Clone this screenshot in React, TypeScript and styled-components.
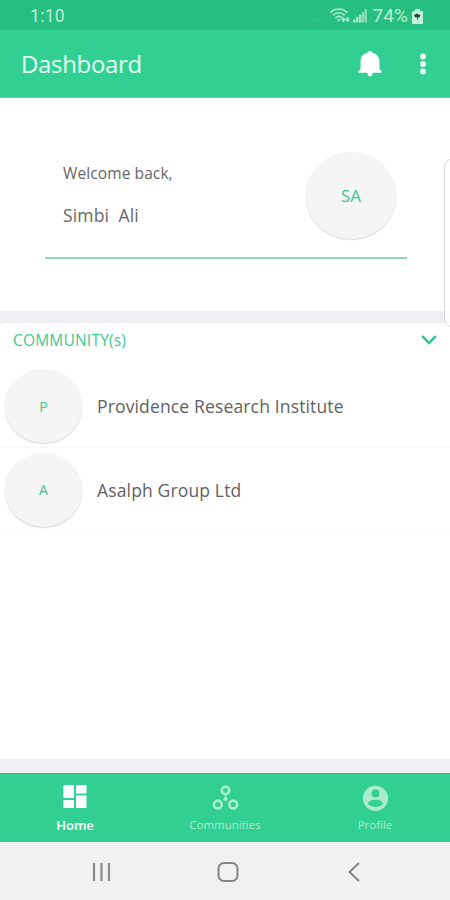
import React from "react";
import styled, { createGlobalStyle } from "styled-components";

const GlobalStyle = createGlobalStyle`
  * { box-sizing: border-box; }
  body { margin: 0; background: #fff; font-family: "Open Sans", "Noto Sans", sans-serif; }
  svg { display: block; flex: none; }
`;

const Screen = styled.div`
  position: relative;
  width: 450px;
  height: 900px;
  display: flex;
  flex-direction: column;
  background: #fff;
  overflow: hidden;
`;

const StatusBar = styled.header`
  height: 30px;
  flex: none;
  display: flex;
  align-items: center;
  padding: 2px 27px 0 30px;
  background: #26be81;
  color: #b9f0d6;
  font: 17px/28px Roboto, sans-serif;
`;

const Clock = styled.span`
  font-size: 17.5px;
  letter-spacing: 0.3px;
  margin-right: auto;
`;

const Battery = styled.span`
  margin: 0 4px 0 5px;
  font-size: 19px;
  letter-spacing: 0.1px;
`;

const AppBar = styled.div`
  height: 68px;
  flex: none;
  display: flex;
  align-items: center;
  padding: 1px 24px 0 21px;
  background: #31d092;
  border-bottom: 1px solid #5fd9a9;
`;

const Title = styled.h1`
  margin: 0 auto 0 0;
  font-size: 24px;
  letter-spacing: -0.33px;
  line-height: 32px;
  font-weight: 400;
  color: #e4fff3;
`;

const BellIcon = styled.svg`
  margin-right: 38px;
`;

const Welcome = styled.section`
  height: 213px;
  flex: none;
  padding: 54px 43px 0 45px;
`;

const WelcomeRow = styled.div`
  display: flex;
  height: 107px;
  padding: 0 11px 0 18px;
  justify-content: space-between;
  border-bottom: 2px solid #8fd6b7;
`;

const Greeting = styled.div`
  display: flex;
  flex-direction: column;
  padding-top: 11px;
  gap: 22px;
  color: #666;
`;

const GreetingLine = styled.span<{ $size: number; $spacing: number }>`
  font-size: ${(p) => p.$size}px;
  letter-spacing: ${(p) => p.$spacing}px;
  line-height: 20px;
  white-space: pre;
`;

const Avatar = styled.div<{ $w: number; $h: number; $font: number }>`
  flex: none;
  width: ${(p) => p.$w}px;
  height: ${(p) => p.$h}px;
  border-radius: 50%;
  display: flex;
  align-items: center;
  justify-content: center;
  background: #f5f5f5;
  box-shadow: 0 1px 1.5px rgba(0, 0, 0, 0.17);
  color: #37c990;
  font-size: ${(p) => p.$font}px;
`;

const Divider = styled.div<{ $h: number }>`
  flex: none;
  height: ${(p) => p.$h}px;
  background: #efeff3;
`;

const Panel = styled.section`
  flex: 1;
  background: #fff;
  border-radius: 4px 4px 0 0;
  box-shadow: 0 -4px 0 #efeff3;
`;

const PanelHeader = styled.div`
  height: 41px;
  display: flex;
  align-items: flex-start;
  justify-content: space-between;
  padding: 7px 13px 0;
`;

const PanelTitle = styled.h2`
  margin: 0;
  font-size: 15.5px;
  letter-spacing: 0.2px;
  line-height: 20px;
  font-weight: 400;
  color: #3ccb93;
`;

const Chevron = styled.svg`
  margin-top: 5px;
`;

const CommunityRow = styled.div`
  height: 83.5px;
  display: flex;
  align-items: center;
  gap: 15px;
  padding: 2px 5px 0;
  border-bottom: 1px solid #f8f8f8;
`;

const CommunityName = styled.span`
  font-size: 17.5px;
  letter-spacing: 0.15px;
  color: #626262;
`;

const TabBar = styled.nav`
  height: 69px;
  flex: none;
  display: grid;
  grid-template-columns: repeat(3, 1fr);
  background: #31d092;
  border-top: 1px solid #25c184;
`;

const Tab = styled.div<{ $active?: boolean }>`
  display: flex;
  flex-direction: column;
  align-items: center;
  padding-top: 8px;
  color: ${(p) => (p.$active ? "#fff" : "#a9ecce")};
`;

const TabLabel = styled.span<{ $size: number; $weight: number }>`
  margin-top: 5px;
  font-size: ${(p) => p.$size}px;
  font-weight: ${(p) => p.$weight};
  line-height: 16px;
`;

const SystemBar = styled.footer`
  height: 58px;
  flex: none;
  display: flex;
  align-items: center;
  padding: 2px 90px 0 92px;
  background: #f1f1f1;
`;

const HomeKey = styled.svg`
  margin: 0 auto 0 105.5px;
`;

const EdgeHandle = styled.div`
  position: absolute;
  top: 159px;
  right: -12px;
  width: 18px;
  height: 168px;
  border: 1.5px solid #d9d9dc;
  border-radius: 7px;
  background: rgba(255, 255, 255, 0.75);
`;

const communities = [
  { initial: "P", name: "Providence Research Institute" },
  { initial: "A", name: "Asalph Group Ltd" },
];

export default function App() {
  return (
    <>
      <GlobalStyle />
      <Screen>
        <StatusBar>
          <Clock>1:10</Clock>
          <svg width="58" height="18" viewBox="0 0 58 18">
            <path d="M0 13.500h13" stroke="#3cc48e" strokeWidth="1" strokeDasharray="3 1" />
            <g fill="none" stroke="#a9e8ca" strokeWidth="1.600" strokeLinecap="round">
              <path d="M21.800 5.200C26 1 33.600 1 37.800 5.200" />
              <path d="M24.300 8C27 5 32.600 5 35.300 8" />
              <path d="M26.800 10.700C28.200 8.900 31.400 8.900 32.800 10.700" />
            </g>
            <path d="M29.800 15l-2-2.800h4z" fill="#a9e8ca" />
            <path d="M34.500 10l2.200 3h-1.300v2h-1.800v-2h-1.300zM38.500 15.200l-2.200-3h1.300v-2h1.800v2h1.300z" fill="#c5f3dd" />
            <path d="M44 12.500h2.500v3H44zM47 10h2.500v5.500H47zM50 7.500h2.500v8H50z" fill="#a2e7c6" />
            <path d="M53 5h2.300v10.500H53zM55.800 2H58v13.500h-2.200z" fill="#8cdfb9" />
          </svg>
          <Battery>74%</Battery>
          <svg width="11" height="15" viewBox="0 0 11 15">
            <path d="M3 0h5v2h2a1 1 0 0 1 1 1v11a1 1 0 0 1-1 1H1a1 1 0 0 1-1-1V3a1 1 0 0 1 1-1h2z" fill="#c4f1dc" />
            <path d="M2 6L5 4.500l3.500 1.700-.8 2H6.200l-.7 3.300-.6-3.200H3z" fill="#174e38" />
          </svg>
        </StatusBar>

        <AppBar>
          <Title>Dashboard</Title>
          <BellIcon width="24" height="26" viewBox="0 0 24 26">
            <path
              fill="#fff"
              d="M12 0c1.300 0 2.200.7 2.400 1.700 4.300 1 7 4 7 8.300v8l2.100 2.300v1.500H.5v-1.500L2.600 18v-8c0-4.300 2.700-7.300 7-8.300C9.800.7 10.700 0 12 0zM9.400 21.500h5.200c-.2 2.600-1.200 4-2.600 4s-2.400-1.400-2.600-4z"
            />
          </BellIcon>
          <svg width="6" height="22" viewBox="0 0 6 22" fill="#effff8">
            <circle cx="3" cy="3.500" r="2.900" />
            <circle cx="3" cy="11" r="2.900" />
            <circle cx="3" cy="18.500" r="2.900" />
          </svg>
        </AppBar>

        <Welcome>
          <WelcomeRow>
            <Greeting>
              <GreetingLine $size={15.5} $spacing={0.1}>Welcome back,</GreetingLine>
              <GreetingLine $size={17.5} $spacing={0.15}>{"Simbi  Ali"}</GreetingLine>
            </Greeting>
            <Avatar $w={90} $h={87} $font={17}>SA</Avatar>
          </WelcomeRow>
        </Welcome>

        <Divider $h={12} />

        <Panel>
          <PanelHeader>
            <PanelTitle>COMMUNITY(s)</PanelTitle>
            <Chevron width="16" height="10" viewBox="0 0 16 10" fill="none" stroke="#2bc58a" strokeWidth="2.400">
              <path d="M1.200 1.200L8 8l6.800-6.800" />
            </Chevron>
          </PanelHeader>
          {communities.map((c) => (
            <CommunityRow key={c.name}>
              <Avatar $w={77} $h={74} $font={14}>{c.initial}</Avatar>
              <CommunityName>{c.name}</CommunityName>
            </CommunityRow>
          ))}
        </Panel>

        <Divider $h={14} />

        <TabBar>
          <Tab $active>
            <svg width="26" height="30" viewBox="0 0 26 30" fill="currentColor">
              <path d="M1.500 3h10.500v13H1.500zM14 3h10.500v8.500H14zM1.500 18h10.500v8H1.500zM14 13.500h10.500V26H14z" />
            </svg>
            <TabLabel $size={13} $weight={600}>Home</TabLabel>
          </Tab>
          <Tab>
            <svg width="28" height="30" viewBox="0 0 28 30" fill="none" stroke="currentColor" strokeWidth="2.600">
              <circle cx="14.500" cy="8.500" r="3.700" />
              <circle cx="6.800" cy="22.500" r="3.900" />
              <circle cx="22.200" cy="22.500" r="3.900" />
              <path d="M14.500 12v5" strokeWidth="1.400" />
              <circle cx="14.500" cy="17" r="2.100" fill="currentColor" stroke="none" />
            </svg>
            <TabLabel $size={11.5} $weight={400}>Communities</TabLabel>
          </Tab>
          <Tab>
            <svg width="28" height="30" viewBox="0 0 28 30">
              <circle cx="14.500" cy="16.300" r="12.600" fill="currentColor" />
              <circle cx="14.500" cy="11.500" r="4" fill="#31d092" />
              <ellipse cx="14.500" cy="21.300" rx="7.300" ry="3.600" fill="#31d092" />
            </svg>
            <TabLabel $size={11.5} $weight={400}>Profile</TabLabel>
          </Tab>
        </TabBar>

        <SystemBar>
          <svg width="19" height="20" viewBox="0 0 19 20" stroke="#8a8a8a" strokeWidth="2.200">
            <path d="M2 1v18M9.500 1v18M17 1v18" />
          </svg>
          <HomeKey width="22" height="20" viewBox="0 0 22 20" fill="none" stroke="#858585" strokeWidth="2">
            <rect x="1.500" y="1" width="19" height="18" rx="5.500" />
          </HomeKey>
          <svg width="12" height="20" viewBox="0 0 12 20" fill="none" stroke="#858585" strokeWidth="2">
            <path d="M11 1L1.500 10l9.500 9" />
          </svg>
        </SystemBar>

        <EdgeHandle />
      </Screen>
    </>
  );
}
